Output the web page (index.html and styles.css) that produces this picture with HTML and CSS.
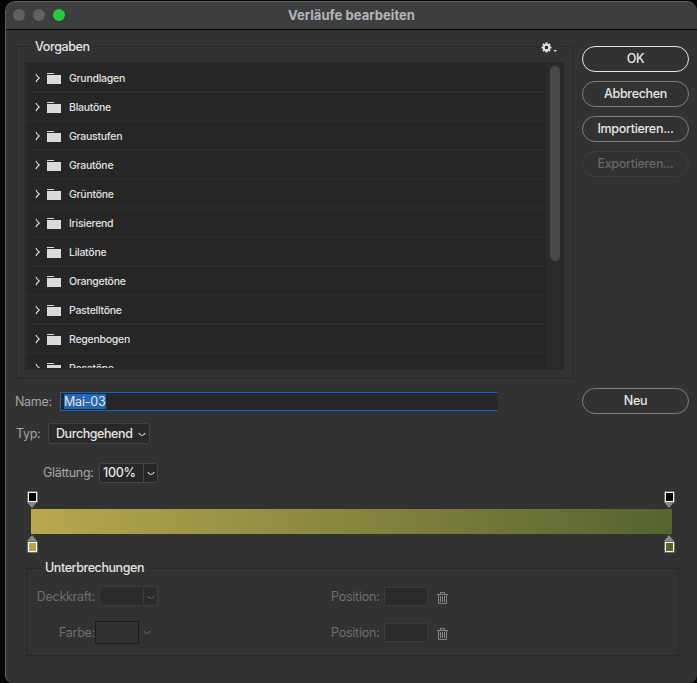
FILE: index.html
```html
<!DOCTYPE html>
<html lang="de">
<head>
<meta charset="utf-8">
<title>Verläufe bearbeiten</title>
<link rel="stylesheet" href="styles.css">
</head>
<body>
<svg width="0" height="0" class="defs">
  <symbol id="arrow" viewBox="0 0 6 10"><path d="M1 .8 Q1.6 3 4.2 5 Q1.6 7 1 9.2" fill="none" stroke="currentColor" stroke-width="1.1"/></symbol>
  <symbol id="folder" viewBox="0 0 14 11"><path d="M0 0h6.5l1 1H0zM0 2h14v9H0z" fill="currentColor"/></symbol>
  <symbol id="chev" viewBox="0 0 8 5"><path d="M.8 1 Q2.4 3.5 4 3.5 Q5.6 3.5 7.2 1" fill="none" stroke="currentColor" stroke-width="1.1"/></symbol>
  <symbol id="trash" viewBox="0 0 11 12"><path d="M0 2.5h11M3.5 2V.5h4V2M1.5 3v8.5h8V3M3.5 4v6M5.5 4v6M7.5 4v6" fill="none" stroke="currentColor"/></symbol>
  <symbol id="down" viewBox="0 0 10 6"><path d="M0 0h10L5 6z" fill="#888"/></symbol>
  <symbol id="up" viewBox="0 0 10 6"><path d="M0 6h10L5 0z" fill="#888"/></symbol>
</svg>
<div class="window">
  <header class="titlebar">
    <div class="lights"><i></i><i></i><i class="on"></i></div>
    <h1>Verläufe bearbeiten</h1>
  </header>
  <main>
    <section class="top">
      <div class="group presets">
        <span class="legend">Vorgaben</span>
        <span class="gear"><svg width="17" height="12" viewBox="0 0 17 12"><g stroke="#e2e2e2" stroke-width="2.2"><path d="M5.5 .5v3M5.5 7.5v3M.5 5.5h3M7.5 5.5h3M2 2l2 2M7 7l2 2M9 2L7 4M4 7L2 9"/></g><circle cx="5.5" cy="5.5" r="2.8" fill="none" stroke="#e2e2e2" stroke-width="1.8"/><path d="M12.5 8h3.6l-1.8 2z" fill="#ddd"/></svg></span>
        <div class="list">
          <div class="rows">
            <div class="row"><svg class="arrow"><use href="#arrow"/></svg><svg class="folder"><use href="#folder"/></svg>Grundlagen</div>
            <div class="row"><svg class="arrow"><use href="#arrow"/></svg><svg class="folder"><use href="#folder"/></svg>Blautöne</div>
            <div class="row"><svg class="arrow"><use href="#arrow"/></svg><svg class="folder"><use href="#folder"/></svg>Graustufen</div>
            <div class="row"><svg class="arrow"><use href="#arrow"/></svg><svg class="folder"><use href="#folder"/></svg>Grautöne</div>
            <div class="row"><svg class="arrow"><use href="#arrow"/></svg><svg class="folder"><use href="#folder"/></svg>Grüntöne</div>
            <div class="row"><svg class="arrow"><use href="#arrow"/></svg><svg class="folder"><use href="#folder"/></svg>Irisierend</div>
            <div class="row"><svg class="arrow"><use href="#arrow"/></svg><svg class="folder"><use href="#folder"/></svg>Lilatöne</div>
            <div class="row"><svg class="arrow"><use href="#arrow"/></svg><svg class="folder"><use href="#folder"/></svg>Orangetöne</div>
            <div class="row"><svg class="arrow"><use href="#arrow"/></svg><svg class="folder"><use href="#folder"/></svg>Pastelltöne</div>
            <div class="row"><svg class="arrow"><use href="#arrow"/></svg><svg class="folder"><use href="#folder"/></svg>Regenbogen</div>
            <div class="row"><svg class="arrow"><use href="#arrow"/></svg><svg class="folder"><use href="#folder"/></svg>Rosatöne</div>
          </div>
          <div class="scroll"><div class="thumb"></div></div>
        </div>
      </div>
      <div class="buttons">
        <button class="primary">OK</button>
        <button>Abbrechen</button>
        <button>Importieren...</button>
        <button class="off">Exportieren...</button>
      </div>
    </section>
    <section class="name">
      <label>Name:</label>
      <div class="input"><span>Mai-03</span></div>
      <button>Neu</button>
    </section>
    <section class="type">
      <label>Typ:</label>
      <div class="select"><span>Durchgehend</span><svg class="chev"><use href="#chev"/></svg></div>
    </section>
    <section class="smooth">
      <label>Glättung:</label>
      <div class="combo"><span>100%</span><b><svg class="chev"><use href="#chev"/></svg></b></div>
    </section>
    <section class="gradient">
      <div class="stops">
        <div class="stop"><i class="black"></i><svg><use href="#down"/></svg></div>
        <div class="stop"><i class="black"></i><svg><use href="#down"/></svg></div>
      </div>
      <div class="bar"></div>
      <div class="stops lower">
        <div class="stop"><svg><use href="#up"/></svg><i class="gold"></i></div>
        <div class="stop"><svg><use href="#up"/></svg><i class="olive"></i></div>
      </div>
    </section>
    <section class="group breaks">
      <span class="legend">Unterbrechungen</span>
      <div class="line">
        <label>Deckkraft:</label>
        <div class="combo dim"><span></span><b><svg class="chev"><use href="#chev"/></svg></b></div>
        <label class="pos">Position:</label><div class="field"></div>
        <svg class="trash"><use href="#trash"/></svg>
      </div>
      <div class="line">
        <label>Farbe:</label>
        <div class="color"><div class="swatch"></div><svg class="chev"><use href="#chev"/></svg></div>
        <label class="pos">Position:</label><div class="field"></div>
        <svg class="trash"><use href="#trash"/></svg>
      </div>
    </section>
  </main>
</div>
</body>
</html>
```
FILE: styles.css
```css
* { box-sizing: border-box; }
html { background: #050505; }
body { margin: 0; padding: 1px 0 0 5px; height: 683px; overflow: hidden; font: 12.5px/16px Inter, "Liberation Sans", sans-serif; letter-spacing: -.3px; color: #e4e4e4; }
svg { display: block; flex: none; }
.defs { position: absolute; }
.window { width: 692px; height: 682px; background: #323232; border: solid #606060; border-width: 1px 0 0 1px; border-radius: 10px 10px 8px 8px; overflow: hidden; }
.titlebar { display: grid; grid-template-columns: 80px 1fr 80px; align-items: center; height: 28px; background: #3d3e40; border-bottom: 1px solid #000; }
.lights { display: flex; gap: 8px; padding: 0 0 1px 7px; }
.lights i { width: 12px; height: 12px; border-radius: 50%; background: #5f6062; }
.lights .on { background: #28c840; }
h1 { margin: 0; padding-bottom: 2px; text-align: center; font-size: 13px; line-height: 16px; font-weight: 700; letter-spacing: .05px; color: #b4b5b6; }
.top { display: flex; gap: 8px; padding: 16px 0 0 10px; }
.group { position: relative; border: 1px solid #272727; }
.legend { position: absolute; top: -8px; background: #323232; padding: 0 4px; font-weight: 500; letter-spacing: -.42px; white-space: nowrap; }
.presets { width: 558px; height: 333px; padding: 15px 9px 0 8px; }
.presets .legend { left: 14px; letter-spacing: -.4px; }
.gear { position: absolute; right: 15px; top: -5px; background: #323232; }
.list { display: flex; height: 308px; border: 1px solid #272727; border-width: 2px 1px; background: #2a2a2a; padding-left: 2px; overflow: hidden; }
.rows { width: 518px; background: #262626; }
.row { display: flex; align-items: center; height: 29px; border-bottom: 2px solid #2b2b2b; padding: 3px 0 0 7px; font-size: 10.5px; font-weight: 500; letter-spacing: -.27px; color: #e0e0e0; }
.row svg { margin-bottom: 2px; }
.arrow { width: 6px; height: 10px; margin-right: 6px; color: #ddd; }
.folder { width: 14px; height: 11px; margin-right: 8px; color: #dadada; }
.scroll { padding: 2px 0 0 4px; }
.thumb { width: 10px; height: 195px; border-radius: 5px; background: #484848; }
.buttons { display: flex; flex-direction: column; gap: 9px; }
button { width: 107px; height: 26px; flex: none; padding: 0 0 1px; border: 1px solid #7d7d7d; border-radius: 13px; background: none; color: #e6e6e6; font: 500 12.5px/16px Inter, "Liberation Sans", sans-serif; letter-spacing: -.3px; }
button.primary { border: 1.5px solid #e4e4e4; }
button.off { color: #666; border-color: #3e3e3e; }
label { color: #a6a6a6; }
.name { display: flex; align-items: center; height: 26px; margin-top: 9px; padding-left: 9px; }
.name label { width: 45px; margin-top: 2px; }
.input { width: 438px; height: 19px; border: 1px solid #1463d2; border-right-color: #292929; background: #262626; padding: 1px 3px; margin: 1px 84px 0 0; }
.input span { display: inline-block; background: #2468b0; line-height: 16px; height: 15px; letter-spacing: -.2px; }
.type { display: flex; align-items: center; height: 22px; margin-top: 9px; padding-left: 10px; }
.type label { width: 32px; }
.select { display: flex; align-items: center; justify-content: space-between; width: 102px; height: 21px; margin-bottom: 1px; border: 1px solid #434343; border-radius: 3px; background: #292929; padding: 0 3px 0 7px; font-weight: 500; letter-spacing: -.42px; }
.chev { width: 8px; height: 5px; }
.select .chev { margin-top: 2px; }
.smooth { display: flex; align-items: center; height: 21px; margin-top: 17px; padding-left: 37px; }
.smooth label { width: 56px; }
.combo { display: flex; width: 59px; height: 20px; border: 1px solid #444; border-radius: 3px; background: #272727; }
.combo span { width: 43px; padding-left: 3px; line-height: 18px; font-weight: 500; }
.combo b { flex: 1; display: grid; place-items: center; border-left: 1px solid #444; padding-top: 2px; }
.gradient { padding: 9px 23px 0 21px; }
.stops { display: flex; justify-content: space-between; height: 17px; }
.stops.lower { padding-top: 1px; height: 18px; }
.stop { width: 10px; height: 16px; }
.stop i { display: block; width: 9px; height: 10px; border: 1px solid #f6f6f6; margin-left: 1px; box-shadow: 0 0 0 .5px #aaa; }
.lower .stop i { margin-top: 1px; }
.stop svg { width: 10px; height: 6px; }
.black { background: #000; }
.gold { background: #b6a64e; }
.olive { background: #57652d; }
.bar { width: 641px; height: 25px; margin-left: 4px; background: linear-gradient(90deg, #b8a84f, #55632f); }
.breaks { width: 653px; height: 88px; margin: 16px 0 0 20px; padding-top: 9px; }
.breaks .legend { left: 14px; top: -9px; }
.line { display: flex; align-items: center; height: 36px; padding-left: 2px; }
.line label { width: 66px; margin-top: 2px; color: #6f6f6f; text-align: right; letter-spacing: -.25px; }
.line .combo { margin-left: 4px; margin-right: 173px; color: #686868; }
.combo.dim, .combo.dim b { border-color: #3c3c3c; }
.combo.dim { background: #2a2a2a; }
.color { display: flex; align-items: center; gap: 4px; width: 60px; margin-right: 176px; color: #686868; }
.swatch { width: 44px; height: 23px; border: 1px solid #1c1c1c; }
.line label.pos { width: 49px; text-align: left; }
.field { width: 44px; height: 19px; border: 1px solid #3b3b3b; background: #2a2a2a; margin: 1px 9px 0 4px; }
.trash { width: 11px; height: 12px; color: #858585; margin-top: 4px; }
```
